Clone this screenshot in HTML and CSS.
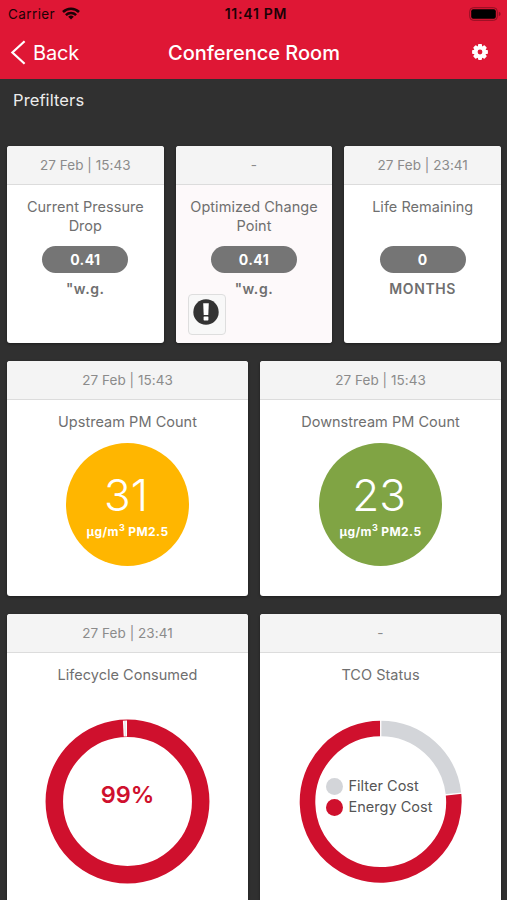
FILE: index.html
```
<!DOCTYPE html>
<html lang="en">
<head>
    <meta charset="UTF-8">
    <meta name="viewport" content="width=device-width, initial-scale=1.0">
    <title>Conference Room</title>
    <link rel="stylesheet" href="styles.css">
</head>
<body>
    <header>
        <div class="status-bar">
            <div class="carrier">
                <span>Carrier</span>
                <svg width="18" height="13" viewBox="0 0 18 13">
                    <g fill="none" stroke="#1c0206" stroke-width="2.5">
                        <path d="M1 5a11.3 11.3 0 0 1 16 0"/>
                        <path d="M3.9 8.1a7.2 7.2 0 0 1 10.2 0"/>
                    </g>
                    <path d="M9 12.6L6.2 9.8a4 4 0 0 1 5.6 0z" fill="#1c0206"/>
                </svg>
            </div>
            <div class="clock">11:41 PM</div>
            <div class="battery">
                <svg width="33" height="14" viewBox="0 0 33 14">
                    <rect x="0.7" y="0.7" width="27.6" height="12.6" rx="3.6" fill="none" stroke="#8f0f22"/>
                    <rect x="2.2" y="2.2" width="24.6" height="9.6" rx="2" fill="#000"/>
                    <path d="M29.8 4.8q1.8.6 1.8 2.2t-1.8 2.2z" fill="#8f0f22"/>
                </svg>
            </div>
        </div>
        <nav class="nav-bar">
            <a class="back">
                <svg width="16" height="26" viewBox="0 0 16 26">
                    <path d="M14.6 1.3L2.4 12.5l12.2 11.2" fill="none" stroke="#fff" stroke-width="2.2"/>
                </svg>
                <span>Back</span>
            </a>
            <h1>Conference Room</h1>
            <a class="settings">
                <svg width="16" height="16" viewBox="-8 -8 16 16">
                    <g fill="#fff">
                        <rect x="-2" y="-7.9" width="4" height="15.8" rx=".8"/>
                        <rect x="-2" y="-7.9" width="4" height="15.8" rx=".8" transform="rotate(45)"/>
                        <rect x="-2" y="-7.9" width="4" height="15.8" rx=".8" transform="rotate(90)"/>
                        <rect x="-2" y="-7.9" width="4" height="15.8" rx=".8" transform="rotate(135)"/>
                        <circle r="6.3"/>
                    </g>
                    <circle r="2.4" fill="#df1735"/>
                </svg>
            </a>
        </nav>
    </header>

    <h2>Prefilters</h2>

    <main>
        <div class="row row-small">
            <div class="card">
                <div class="card-header">27 Feb | 15:43</div>
                <div class="card-body">
                    <h3>Current Pressure Drop</h3>
                    <div class="pill">0.41</div>
                    <div class="unit">"w.g.</div>
                </div>
            </div>
            <div class="card">
                <div class="card-header">-</div>
                <div class="card-body tinted">
                    <h3>Optimized Change Point</h3>
                    <div class="pill">0.41</div>
                    <div class="unit">"w.g.</div>
                    <button class="alert">
                        <svg width="26" height="26" viewBox="0 0 26 26">
                            <circle cx="13" cy="13" r="12.7" fill="#333"/>
                            <path d="M10.2 4.2h5.6l-.5 11.7h-4.6z" fill="#fff"/>
                            <rect x="10.6" y="17.4" width="4.8" height="4" rx=".6" fill="#fff"/>
                        </svg>
                    </button>
                </div>
            </div>
            <div class="card">
                <div class="card-header">27 Feb | 23:41</div>
                <div class="card-body">
                    <h3>Life Remaining</h3>
                    <div class="pill">0</div>
                    <div class="unit">MONTHS</div>
                </div>
            </div>
        </div>

        <div class="row row-medium">
            <div class="card">
                <div class="card-header">27 Feb | 15:43</div>
                <div class="card-body">
                    <h3>Upstream PM Count</h3>
                    <div class="pm-circle moderate">
                        <div class="pm-value">31</div>
                        <div class="pm-unit">µg/m<sup>3</sup> PM2.5</div>
                    </div>
                </div>
            </div>
            <div class="card">
                <div class="card-header">27 Feb | 15:43</div>
                <div class="card-body">
                    <h3>Downstream PM Count</h3>
                    <div class="pm-circle good">
                        <div class="pm-value">23</div>
                        <div class="pm-unit">µg/m<sup>3</sup> PM2.5</div>
                    </div>
                </div>
            </div>
        </div>

        <div class="row row-large">
            <div class="card">
                <div class="card-header">27 Feb | 23:41</div>
                <div class="card-body">
                    <h3>Lifecycle Consumed</h3>
                    <div class="chart">
                        <svg width="166" height="166" viewBox="-82.5 -82.5 166 166">
                            <circle r="73.2" fill="none" stroke="#cf102d" stroke-width="17.5"/>
                            <path d="M-4.6 -80.8L-.5 -80.9L-.5 -65L-3.8 -65z" fill="#fff"/>
                            <path d="M-3.3 -80.6L-1.9 -80.6L-1.5 -65.5L-2.7 -65.5z" fill="#e4e4e7"/>
                        </svg>
                        <div class="chart-label percent">99%</div>
                    </div>
                </div>
            </div>
            <div class="card">
                <div class="card-header">-</div>
                <div class="card-body">
                    <h3>TCO Status</h3>
                    <div class="chart">
                        <svg width="166" height="166" viewBox="-82.7 -82.7 166 166">
                            <g fill="none" stroke-width="15.6">
                                <path d="M0 -73.2A73.2 73.2 0 0 1 72.8 -7.7" stroke="#d3d5d9"/>
                                <path d="M72.8 -7.7A73.2 73.2 0 1 1 0 -73.2" stroke="#cf102d"/>
                            </g>
                            <path d="M0 -82V-64M63.6 -6.7L81.5 -8.6" stroke="#fff" stroke-width="1.3"/>
                        </svg>
                        <div class="chart-label legend">
                            <div><i class="dot filter"></i>Filter Cost</div>
                            <div><i class="dot energy"></i>Energy Cost</div>
                        </div>
                    </div>
                </div>
            </div>
        </div>
    </main>
</body>
</html>
```
FILE: styles.css
```
* {
    box-sizing: border-box;
}
body {
    font-family: 'Inter', 'Liberation Sans', sans-serif;
    margin: 0;
    height: 900px;
    overflow: hidden;
    background: #303030;
    color: #6f6f6f;
}
h1, h2, h3 {
    margin: 0;
    font-weight: 400;
}
svg {
    display: block;
}
header {
    height: 79px;
    background: #df1735;
}
.status-bar {
    display: grid;
    grid-template-columns: 1fr auto 1fr;
    align-items: center;
    height: 27px;
    padding: 0 5px 0 8px;
    color: #1c0206;
    font-size: 13.5px;
}
.carrier {
    display: flex;
    align-items: center;
    gap: 7px;
    letter-spacing: 0.4px;
}
.clock {
    margin: 0 -1px 0 1px;
    font-weight: 600;
    font-size: 14px;
    letter-spacing: 0.75px;
}
.battery {
    justify-self: end;
}
.nav-bar {
    display: grid;
    grid-template-columns: 1fr auto 1fr;
    align-items: center;
    height: 51px;
    padding: 0 19px 0 10px;
    color: #fff;
}
.back {
    display: flex;
    align-items: center;
    gap: 7px;
    font-size: 20px;
    letter-spacing: -0.2px;
}
.nav-bar h1 {
    margin: 0 -5px 0 5px;
    font-size: 20px;
    font-weight: 500;
}
.settings {
    justify-self: end;
    padding-bottom: 2px;
}
h2 {
    height: 67px;
    padding: 11px 13px;
    font-size: 16.5px;
    line-height: 20px;
    letter-spacing: 0.1px;
    color: #ececec;
}
main {
    display: flex;
    flex-direction: column;
    gap: 18px;
    padding: 0 6px 0 7px;
}
.row {
    display: grid;
    grid-template-columns: 1fr 1fr;
    gap: 12px;
}
.row-small {
    grid-template-columns: 1fr 1fr 1fr;
    height: 197px;
}
.row-medium {
    height: 235px;
}
.row-large {
    height: 300px;
}
.card {
    display: flex;
    flex-direction: column;
    background: #fff;
    border-radius: 3px;
    overflow: hidden;
    text-align: center;
    box-shadow: 0 1px 3px rgba(0, 0, 0, 0.4);
}
.card-header {
    height: 39px;
    line-height: 38px;
    background: #f4f4f4;
    border-bottom: 1px solid #dcdcdc;
    font-size: 13.5px;
    letter-spacing: 0.05px;
    color: #8b8b8b;
}
.card-body {
    position: relative;
    display: flex;
    flex: 1;
    flex-direction: column;
    align-items: center;
    padding: 13px 12px 0;
}
.tinted {
    background: #fdf9fa;
}
.card-body h3 {
    font-size: 14.5px;
    line-height: 18.5px;
    letter-spacing: 0.03px;
}
.row-small h3 {
    height: 48px;
}
.pill {
    width: 86px;
    height: 27px;
    line-height: 27px;
    border-radius: 14px;
    background: #757575;
    color: #fff;
    font-size: 14px;
    font-weight: 700;
    letter-spacing: 0.4px;
}
.unit {
    margin-top: 7px;
    font-size: 14px;
    line-height: 18px;
    font-weight: 600;
    letter-spacing: 0.6px;
}
.alert {
    position: absolute;
    left: 12px;
    bottom: 8px;
    display: flex;
    align-items: flex-start;
    width: 38px;
    height: 41px;
    padding: 4px;
    background: #f8f8f8;
    border: 1px solid #dedede;
    border-radius: 4px;
}
.pm-circle {
    width: 123px;
    height: 123px;
    margin-top: 11px;
    padding-top: 27px;
    border-radius: 50%;
    color: #fff;
}
.moderate {
    background: #ffb600;
}
.good {
    background: #80a444;
}
.pm-value {
    padding-right: 3px;
    font-size: 44px;
    line-height: 50px;
    font-weight: 300;
}
.pm-unit {
    font-size: 12px;
    line-height: 20px;
    font-weight: 700;
    letter-spacing: 0.4px;
    margin-top: 2px;
}
.pm-unit sup {
    font-size: 9px;
    line-height: 0;
}
.chart {
    position: relative;
    margin-top: 34px;
}
.chart-label {
    position: absolute;
}
.percent {
    left: 0;
    right: 0;
    top: 62px;
    font-size: 23.5px;
    line-height: 28px;
    font-weight: 600;
    color: #cf102d;
}
.legend {
    left: 28px;
    top: 56px;
    font-size: 14.5px;
    line-height: 21px;
    letter-spacing: 0.02px;
    white-space: nowrap;
    color: #555;
}
.legend div {
    display: flex;
    align-items: center;
    gap: 6px;
}
.dot {
    width: 17px;
    height: 17px;
    border-radius: 50%;
    position: relative;
    top: 1px;
}
.filter {
    background: #d3d5d9;
}
.energy {
    background: #cf102d;
}
```
